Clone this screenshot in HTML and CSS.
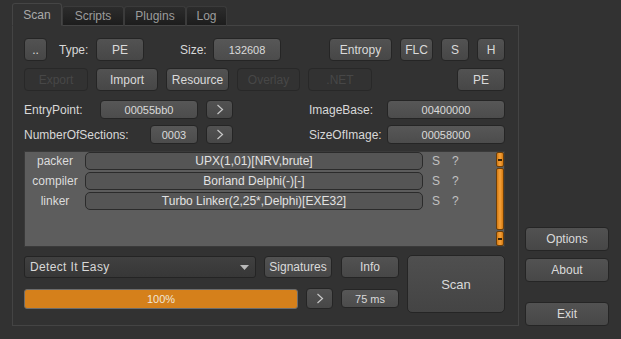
FILE: index.html
```html
<!DOCTYPE html>
<html lang="en">
<head>
    <meta charset="UTF-8">
    <title>Detect It Easy</title>
    <link rel="stylesheet" href="styles.css">
</head>
<body>
<div class="app">

    <div class="main">
        <!-- Tabs -->
        <div class="tabs">
            <div class="tab active w-scan">Scan</div>
            <div class="tab w-mid">Scripts</div>
            <div class="tab w-mid">Plugins</div>
            <div class="tab w-log">Log</div>
        </div>

        <div class="panel">
            <!-- File type / size -->
            <div class="row r1">
                <div class="btn dots">..</div>
                <span class="lbl l-type">Type:</span>
                <div class="btn w48">PE</div>
                <span class="lbl l-size">Size:</span>
                <div class="btn fld w68">132608</div>
                <div class="btn w63 push">Entropy</div>
                <div class="btn w33">FLC</div>
                <div class="btn w28">S</div>
                <div class="btn w28">H</div>
            </div>

            <div class="row r2">
                <div class="btn off w64">Export</div>
                <div class="btn w62">Import</div>
                <div class="btn w63">Resource</div>
                <div class="btn off w63">Overlay</div>
                <div class="btn off w64">.NET</div>
                <div class="btn w48 push">PE</div>
            </div>

            <!-- Header values -->
            <div class="row r3">
                <span class="lbl l-ep">EntryPoint:</span>
                <div class="btn fld w98">00055bb0</div>
                <div class="btn arrow"><svg width="8" height="11" viewBox="0 0 8 11"><polyline points="1.5,1 6.5,5.5 1.5,10" fill="none" stroke="#c8c8c8" stroke-width="1.2"/></svg></div>
                <span class="lbl l-right push">ImageBase:</span>
                <div class="btn fld w118">00400000</div>
            </div>

            <div class="row r3 r4">
                <span class="lbl l-ns">NumberOfSections:</span>
                <div class="btn fld w48">0003</div>
                <div class="btn arrow"><svg width="8" height="11" viewBox="0 0 8 11"><polyline points="1.5,1 6.5,5.5 1.5,10" fill="none" stroke="#c8c8c8" stroke-width="1.2"/></svg></div>
                <span class="lbl l-right push">SizeOfImage:</span>
                <div class="btn fld w118">00058000</div>
            </div>

            <!-- Detection results -->
            <div class="result">
                <div class="result-rows">
                    <div class="res-row">
                        <span class="res-type">packer</span>
                        <div class="res-name">UPX(1,01)[NRV,brute]</div>
                        <span class="res-s">S</span>
                        <span class="res-q">?</span>
                    </div>
                    <div class="res-row">
                        <span class="res-type">compiler</span>
                        <div class="res-name">Borland Delphi(-)[-]</div>
                        <span class="res-s">S</span>
                        <span class="res-q">?</span>
                    </div>
                    <div class="res-row">
                        <span class="res-type">linker</span>
                        <div class="res-name">Turbo Linker(2,25*,Delphi)[EXE32]</div>
                        <span class="res-s">S</span>
                        <span class="res-q">?</span>
                    </div>
                </div>
                <div class="scrollbar">
                    <div class="sb-btn"><i></i></div>
                    <div class="sb-thumb"></div>
                    <div class="sb-btn"><i></i></div>
                </div>
            </div>

            <!-- Scan controls -->
            <div class="bottom">
                <div class="bottom-left">
                    <div class="row ra">
                        <div class="combo">
                            <span>Detect It Easy</span>
                            <svg width="9" height="5" viewBox="0 0 9 5"><polygon points="0,0 9,0 4.5,5" fill="#b8b8b8"/></svg>
                        </div>
                        <div class="btn w68">Signatures</div>
                        <div class="btn w58 ml9">Info</div>
                    </div>
                    <div class="row rb">
                        <div class="progress">100%</div>
                        <div class="btn arrow tall"><svg width="8" height="11" viewBox="0 0 8 11"><polyline points="1.5,1 6.5,5.5 1.5,10" fill="none" stroke="#c8c8c8" stroke-width="1.2"/></svg></div>
                        <div class="btn fld w58 time">75 ms</div>
                    </div>
                </div>
                <div class="btn scan">Scan</div>
            </div>
        </div>
    </div>

    <!-- Side buttons -->
    <div class="side">
        <div class="btn sbtn">Options</div>
        <div class="btn sbtn">About</div>
        <div class="btn sbtn exit">Exit</div>
    </div>

</div>
</body>
</html>
```

FILE: styles.css
```css
/* Global */
* { box-sizing: border-box; }
body {
    margin: 0;
    background: #323232;
    font-family: "Liberation Sans", Arial, sans-serif;
    font-size: 12px;
    color: #d8d8d8;
}
.app { display: flex; height: 339px; padding: 4px 0 0 12px; }
.main { width: 507px; }

/* Tabs */
.tabs { display: flex; align-items: flex-end; height: 22px; position: relative; z-index: 1; margin-bottom: -1px; }
.tab {
    height: 20px;
    display: flex;
    align-items: center;
    justify-content: center;
    color: #9c9c9c;
    font-size: 12px;
    background: linear-gradient(#2c2c2c, #1d1d1d);
    border: 1px solid #3b3b3b;
    border-bottom: 1px solid #444;
    border-radius: 3px 3px 0 0;
}
.tab.active {
    height: 23px;
    background: #323232;
    border-color: #454545;
    border-bottom-color: #323232;
    color: #aaa;
}
.w-scan { width: 50px; }
.w-mid { width: 62px; }
.w-log { width: 41px; }

/* Panel */
.panel {
    height: 301px;
    border: 1px solid #444;
    padding: 12px 13px 12px 11px;
}
.row { display: flex; align-items: center; }
.r1, .r2 { height: 23px; }
.r1 { margin-bottom: 7px; }
.r2 { margin-bottom: 9px; }
.r3 { height: 19px; margin-bottom: 6px; }
.r4 { margin-bottom: 7px; }
.push { margin-left: auto; }
.r1 .btn + .btn, .r2 .btn + .btn { margin-left: 8px; }
.r1 .btn.push, .r2 .btn.push { margin-left: auto; }

.lbl { color: #d8d8d8; white-space: nowrap; }
.l-type { margin: 0 0 0 12px; width: 37px; }
.l-size { margin-left: 36px; width: 33px; }
.l-ep { width: 76px; }
.l-ns { width: 126px; }
.l-right { width: 78px; }

/* Buttons & fields */
.btn {
    height: 100%;
    display: flex;
    align-items: center;
    justify-content: center;
    background: linear-gradient(#525252, #474747);
    border: 1px solid #252525;
    border-radius: 4px;
    color: #dadada;
    white-space: nowrap;
}
.btn.off { background: #323232; border-color: #282828; color: #474747; }
.fld { font-size: 11px; background: linear-gradient(#575757, #4c4c4c); }
.dots { width: 23px; align-items: flex-end; padding-bottom: 3px; }
.w28 { width: 28px; }
.w33 { width: 33px; }
.w48 { width: 48px; }
.w58 { width: 58px; }
.w62 { width: 62px; }
.w63 { width: 63px; }
.w64 { width: 64px; }
.w68 { width: 68px; }
.w98 { width: 98px; }
.w118 { width: 118px; }
.arrow { width: 27px; margin-left: 8px; }
.ml9 { margin-left: 9px; }

/* Results */
.result {
    height: 96px;
    display: flex;
    background: #5d5d5d;
    border: 1px solid #3a3a3a;
    margin-bottom: 8px;
}
.result-rows { flex: 1; display: flex; flex-direction: column; gap: 2px; }
.res-row { display: flex; align-items: center; height: 18px; }
.res-type { width: 60px; text-align: center; color: #dcdcdc; }
.res-name {
    width: 338px;
    height: 18px;
    line-height: 16px;
    text-align: center;
    background: #555;
    border: 1px solid #2b2b2b;
    border-radius: 5px;
    color: #e2e2e2;
}
.res-s { margin-left: 9px; width: 20px; color: #c0c0c0; }
.res-q { color: #c0c0c0; }

.scrollbar { width: 8px; display: flex; flex-direction: column; gap: 1px; }
.sb-btn, .sb-thumb {
    background: linear-gradient(90deg, #d47a12, #f7a23a 50%, #d47a12);
    border: 1px solid #6a3e0a;
    border-radius: 2px;
}
.sb-btn { height: 15px; display: flex; align-items: center; justify-content: center; }
.sb-btn i { width: 4px; height: 2px; background: #3a2508; }
.sb-thumb { flex: 1; }

/* Bottom */
.bottom { display: flex; height: 58px; }
.bottom-left { width: 375px; padding-top: 1px; }
.ra { height: 22px; margin-bottom: 10px; }
.rb { height: 21px; }
.combo {
    width: 232px;
    height: 100%;
    margin-right: 8px;
    display: flex;
    align-items: center;
    justify-content: space-between;
    padding: 0 6px 0 5px;
    background: linear-gradient(#404040, #373737);
    border: 1px solid #242424;
    border-radius: 3px;
    letter-spacing: 0.35px;
}
.progress {
    width: 274px;
    height: 20px;
    line-height: 18px;
    text-align: center;
    font-size: 11px;
    color: #f0e6d8;
    background: #d5801b;
    border: 1px solid #6c6c6c;
    border-radius: 3px;
}
.tall { height: 21px; }
.time { height: 19px; margin-left: 8px; }
.scan { width: 98px; margin-left: 8px; font-size: 13px; border-radius: 5px; background: linear-gradient(#4f4f4f, #444); }

/* Side */
.side {
    width: 84px;
    margin-left: 6px;
    display: flex;
    flex-direction: column;
    justify-content: flex-end;
    padding-bottom: 13px;
}
.sbtn { height: 24px; flex: none; margin-top: 7px; font-size: 12px; }
.exit { margin-top: 20px; }
```
